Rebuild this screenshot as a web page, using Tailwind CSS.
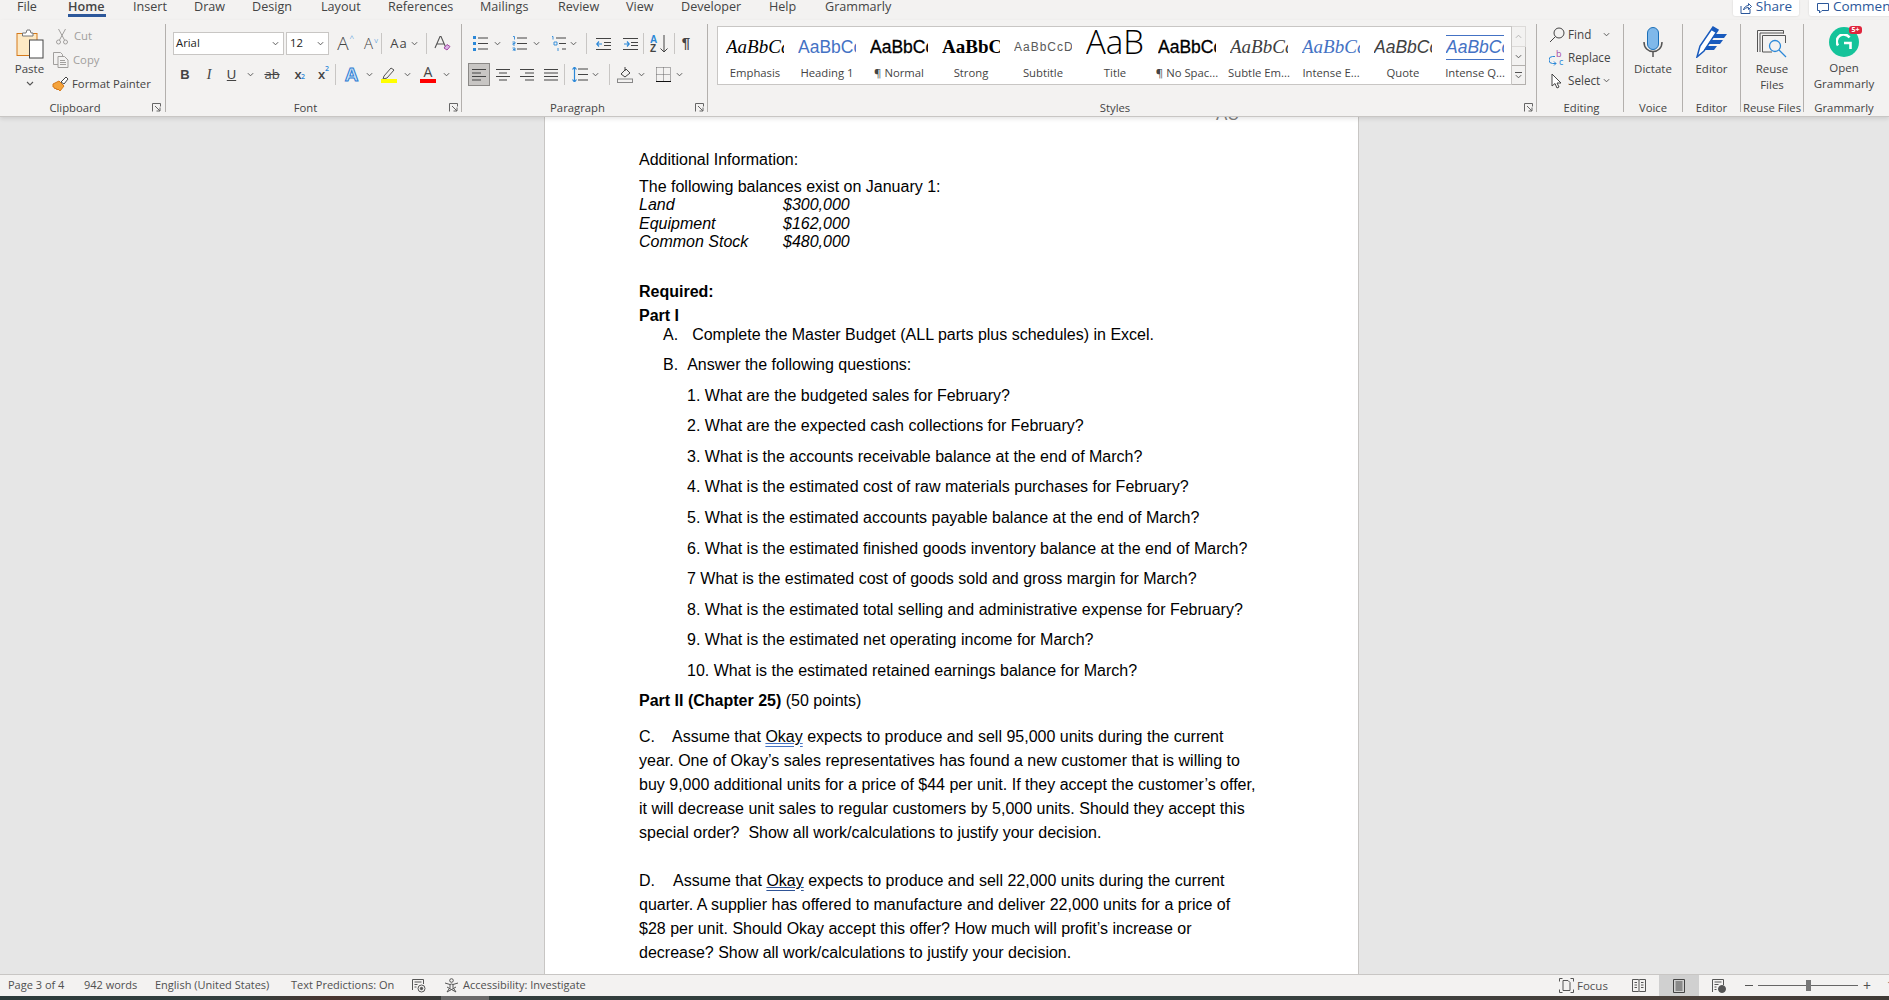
<!DOCTYPE html>
<html lang="en">
<head>
  <meta charset="UTF-8" />
  <title>Word</title>
  <script src="https://cdn.jsdelivr.net/npm/@tailwindcss/browser@4"></script>
</head>
<body class="w-[1889px] h-[1000px] overflow-hidden flex flex-col bg-[#e6e6e6] font-['Open_Sans',sans-serif] text-[#444444]">

  <!-- icon sprite -->
  <svg class="hidden">
    <symbol id="chev" viewBox="0 0 8 5"><path d="M1 1l3 3 3-3" fill="none" stroke="#555" stroke-width="1.1"/></symbol>
    <symbol id="launch" viewBox="0 0 9 9"><path d="M.5 8.5V.5h8v3M.5.5" fill="none" stroke="#666"/><path d="M3 3l5 5M8 4.5V8H4.5" fill="none" stroke="#666"/></symbol>
  </svg>

  <!-- tabs -->
  <div class="h-[20px] shrink-0 bg-[#f3f2f1] flex overflow-hidden pl-[17px] text-[12.6px] leading-[20px]">
    <span class="w-[51px] -mt-[3px]">File</span>
    <span class="w-[65px] -mt-[3px] font-semibold"><span class="block w-[38px] h-[20px] border-b-[3px] border-[#2b579a]">Home</span></span>
    <span class="w-[61px] -mt-[3px]">Insert</span>
    <span class="w-[58px] -mt-[3px]">Draw</span>
    <span class="w-[69px] -mt-[3px]">Design</span>
    <span class="w-[67px] -mt-[3px]">Layout</span>
    <span class="w-[92px] -mt-[3px]">References</span>
    <span class="w-[78px] -mt-[3px]">Mailings</span>
    <span class="w-[68px] -mt-[3px]">Review</span>
    <span class="w-[55px] -mt-[3px]">View</span>
    <span class="w-[88px] -mt-[3px]">Developer</span>
    <span class="w-[56px] -mt-[3px]">Help</span>
    <span class="w-[64px] -mt-[3px]">Grammarly</span>
    <div class="ml-auto -mr-[10px] flex gap-[10px] shrink-0 text-[#2b579a] text-[13.5px]">
      <div class="w-[66px] h-[16px] bg-white rounded-b-[2px] flex items-center justify-center gap-[4px] shadow-[0_0_2px_rgba(0,0,0,0.15)]">
        <svg class="w-[12px] h-[12px]" viewBox="0 0 12 12" fill="none" stroke="#2b579a"><path d="M1 4v7.5h9V7"/><path d="M3.5 8c.5-3 3-4.500 5-4.500V1.500l3 3-3 3V5.500c-2 0-4 1-5 2.500z"/></svg>
        <span class="-mt-[5px]">Share</span>
      </div>
      <div class="w-[90px] h-[16px] bg-white rounded-b-[2px] flex items-center pl-[8px] gap-[4px] shadow-[0_0_2px_rgba(0,0,0,0.15)]">
        <svg class="w-[12px] h-[12px]" viewBox="0 0 12 12" fill="none" stroke="#2b579a"><path d="M.5 1.500h11v7H5l-2.500 2.500V8.500h-2z"/></svg>
        <span class="-mt-[5px]">Comment</span>
      </div>
    </div>
  </div>

  <!-- ribbon -->
  <div class="relative z-10 h-[97px] shrink-0 bg-[#f3f2f1] border-b border-[#c8c6c4] shadow-[0_2px_4px_rgba(0,0,0,0.1)] flex text-[11.3px]">

    <!-- clipboard -->
    <div class="relative w-[165px] h-[96px] shrink-0 flex flex-col">
      <div class="h-[80px] flex">
        <div class="w-[53px] flex flex-col items-center pt-[8px]">
          <svg class="w-[28px] h-[31px] ml-[6px]" viewBox="0 0 28 31">
            <rect x="1" y="5.500" width="20" height="22" fill="#fde9c4" stroke="#d67a1b"/>
            <path d="M6.500 8V5h3.500l1-3h3l1 3h2v3z" fill="#fff" stroke="#777"/>
            <rect x="13.500" y="12" width="13.500" height="18" fill="#fff" stroke="#444"/>
          </svg>
          <span class="mt-[2px] ml-[6px] leading-[16px] text-[11.5px]">Paste</span>
          <svg class="w-[8px] h-[5px] mt-[4px] ml-[6px]"><use href="#chev"/></svg>
        </div>
        <div class="flex flex-col pt-[4px]">
          <div class="h-[24px] flex items-center gap-[4px] text-[#a19f9d]">
            <svg class="w-[12px] h-[17px] ml-[3px]" viewBox="0 0 12 17" fill="none" stroke="#a19f9d"><path d="M2.500 1l6 11M9.500 1l-6 11"/><circle cx="2.500" cy="14" r="2"/><circle cx="9.500" cy="14" r="2"/></svg>
            <span class="ml-[2px]">Cut</span>
          </div>
          <div class="h-[24px] flex items-center gap-[4px] text-[#a19f9d]">
            <svg class="w-[16px] h-[16px]" viewBox="0 0 16 16" fill="none" stroke="#a19f9d"><path d="M5 12.500H.5V.5h7l2 2v2"/><path d="M5 4.500h6.500l3.500 3.500v7.500H5z"/><path d="M7 8.500h5M7 10.500h6M7 12.500h6"/></svg>
            <span>Copy</span>
          </div>
          <div class="h-[24px] flex items-center gap-[3px] -ml-[1px]">
            <svg class="w-[17px] h-[16px]" viewBox="0 0 17 16"><path d="M1 8l6-3 5 5-4 5-2-2-1 1-1-2-1 1-1-2-1 0z" fill="#f5a33a" stroke="#d67a1b"/><path d="M9 6l5-5 2 2-4 5z" fill="#fff" stroke="#444"/></svg>
            <span class="whitespace-nowrap">Format Painter</span>
          </div>
        </div>
      </div>
      <div class="relative h-[16px] leading-[16px] text-center pr-[15px]">Clipboard
        <svg class="absolute right-[4px] top-[3px] w-[9px] h-[9px]"><use href="#launch"/></svg>
      </div>
    </div>
    <div class="w-px h-[88px] mt-[4px] bg-[#b3b0ad] shrink-0"></div>

    <!-- font -->
    <div class="relative w-[295px] h-[96px] shrink-0 flex flex-col">
      <div class="h-[80px] pt-[12px] pl-[7px] flex flex-col gap-[8px]">
        <div class="h-[23px] flex items-center">
          <div class="w-[111px] h-[23px] bg-white border border-[#c8c6c4] flex items-center justify-between pl-[2px] pr-[4px] text-[#222]">Arial<svg class="w-[7px] h-[5px]"><use href="#chev"/></svg></div>
          <div class="w-[43px] h-[23px] ml-[2px] bg-white border border-[#c8c6c4] flex items-center justify-between pl-[3px] pr-[4px] text-[#222]">12<svg class="w-[7px] h-[5px]"><use href="#chev"/></svg></div>
          <div class="w-[26px] text-center text-[19px] font-light leading-none ml-[1px] relative">A<span class="absolute right-[2px] top-[0px] text-[8px] text-[#2b88d8]">^</span></div>
          <div class="w-[25px] text-center text-[15px] font-light leading-none relative">A<span class="absolute right-[3px] top-[0px] text-[8px] text-[#2b88d8]">v</span></div>
          <div class="w-px h-[21px] bg-[#c8c6c4]"></div>
          <div class="w-[44px] flex items-center justify-center gap-[3px] text-[13px] tracking-[1px]">Aa<svg class="w-[7px] h-[5px]"><use href="#chev"/></svg></div>
          <div class="w-px h-[21px] bg-[#c8c6c4]"></div>
          <div class="w-[30px] flex justify-center">
            <svg class="w-[17px] h-[17px]" viewBox="0 0 17 17" fill="none"><path d="M1 13L6 1.500h1L12 13M3 9h7" stroke="#555" stroke-width="1.100"/><path d="M10 13l3-3.500 3 2-3 3.500z" fill="#d9b3e6" stroke="#a349a4"/></svg>
          </div>
        </div>
        <div class="h-[23px] flex items-center">
          <div class="w-[24px] text-center font-['Liberation_Sans',sans-serif] font-bold text-[13px]">B</div>
          <div class="w-[24px] text-center font-['Liberation_Serif',serif] italic text-[14px]">I</div>
          <div class="w-[21px] text-center font-['Liberation_Sans',sans-serif] underline text-[13px]">U</div>
          <div class="w-[16px] flex justify-center"><svg class="w-[7px] h-[5px]"><use href="#chev"/></svg></div>
          <div class="w-[28px] text-center text-[13px] line-through">ab</div>
          <div class="w-[24px] text-center font-semibold text-[13px] relative">x<span class="absolute left-[15px] top-[7px] text-[7px] text-[#2b88d8]">2</span></div>
          <div class="w-[23px] text-center font-semibold text-[13px] relative">x<span class="absolute left-[15px] -top-[1px] text-[7px] text-[#2b88d8]">2</span></div>
          <div class="w-px h-[21px] bg-[#c8c6c4] ml-[2px]"></div>
          <div class="w-[21px] ml-[5px] text-center font-['Liberation_Sans',sans-serif] font-bold text-[19px] leading-none text-[#cfe6f8] [-webkit-text-stroke:1px_#2b7cd3]">A</div>
          <div class="w-[14px] flex justify-center"><svg class="w-[7px] h-[5px]"><use href="#chev"/></svg></div>
          <div class="w-[22px] ml-[2px] flex justify-center">
            <svg class="w-[16px] h-[17px]" viewBox="0 0 16 17"><path d="M3 10l7-8 3 2-7 8-4 1z" fill="none" stroke="#555"/><rect y="13" width="16" height="4" fill="#ffff00"/></svg>
          </div>
          <div class="w-[14px] flex justify-center"><svg class="w-[7px] h-[5px]"><use href="#chev"/></svg></div>
          <div class="w-[24px] ml-[2px] flex flex-col items-center -mt-[2px]">
            <span class="text-[14px] leading-[14px]">A</span>
            <span class="w-[16px] h-[4px] bg-[#ff0000]"></span>
          </div>
          <div class="w-[12px] flex justify-center"><svg class="w-[7px] h-[5px]"><use href="#chev"/></svg></div>
        </div>
      </div>
      <div class="relative h-[16px] leading-[16px] text-center pr-[16px]">Font
        <svg class="absolute right-[3px] top-[3px] w-[9px] h-[9px]"><use href="#launch"/></svg>
      </div>
    </div>
    <div class="w-px h-[88px] mt-[4px] bg-[#b3b0ad] shrink-0"></div>

    <!-- paragraph -->
    <div class="relative w-[245px] h-[96px] shrink-0 flex flex-col">
      <div class="h-[80px] pt-[12px] pl-[9px] flex flex-col gap-[8px]">
        <div class="h-[23px] flex items-center">
          <div class="w-[39px] pl-[2px] flex items-center gap-[6px]">
            <svg class="w-[15px] h-[15px]" viewBox="0 0 15 15"><path d="M5 2h10M5 7.500h10M5 13h10" stroke="#444"/><path d="M0 0h3v3H0zM0 6h3v3H0zM0 12h3v3H0z" fill="#2b88d8"/></svg>
            <svg class="w-[7px] h-[5px]"><use href="#chev"/></svg>
          </div>
          <div class="w-[39px] pl-[2px] flex items-center gap-[6px]">
            <svg class="w-[15px] h-[15px]" viewBox="0 0 15 15"><path d="M5 2h10M5 7.500h10M5 13h10" stroke="#444"/><path d="M1 .5h1.500v3M.5 6h2.500v1.500H1V9h2M.5 12h2.500v3H.5M1 13.500h2" stroke="#2b88d8" fill="none" stroke-width=".9"/></svg>
            <svg class="w-[7px] h-[5px]"><use href="#chev"/></svg>
          </div>
          <div class="w-[37px] pl-[2px] flex items-center gap-[4px]">
            <svg class="w-[15px] h-[15px]" viewBox="0 0 15 15"><path d="M5 2h10M8 7.500h7M11 13h4" stroke="#444"/><path d="M1 .5h1v3M3 6h3v3H3zM7 12v3" stroke="#2b88d8" fill="none" stroke-width=".9"/></svg>
            <svg class="w-[7px] h-[5px]"><use href="#chev"/></svg>
          </div>
          <div class="w-px h-[21px] bg-[#c8c6c4]"></div>
          <div class="w-[32px] flex justify-center">
            <svg class="w-[15px] h-[12px]" viewBox="0 0 15 12"><path d="M0 .5h15M8 4.500h7M8 7.500h7M0 11.500h15" stroke="#444"/><path d="M6 6H1M3 3.500L.8 6 3 8.500" fill="none" stroke="#2b88d8" stroke-width="1.200"/></svg>
          </div>
          <div class="w-[22px] flex justify-center">
            <svg class="w-[15px] h-[12px]" viewBox="0 0 15 12"><path d="M0 .5h15M8 4.500h7M8 7.500h7M0 11.500h15" stroke="#444"/><path d="M1 6h5M4 3.500L6.200 6 4 8.500" fill="none" stroke="#2b88d8" stroke-width="1.200"/></svg>
          </div>
          <div class="w-px h-[21px] bg-[#c8c6c4] ml-[2px]"></div>
          <div class="w-[30px] flex justify-center">
            <span class="relative w-[18px] h-[18px] flex flex-col font-['Liberation_Sans',sans-serif] text-[10px] leading-[9px]"><span class="text-[#2b88d8] font-bold">A</span><span class="font-bold">Z</span>
              <svg class="absolute right-[0px] top-[0px] w-[8px] h-[18px]" viewBox="0 0 8 18" fill="none" stroke="#444"><path d="M4 0v17M.5 13.500L4 17l3.500-3.500"/></svg>
            </span>
          </div>
          <div class="w-px h-[21px] bg-[#c8c6c4]"></div>
          <div class="w-[22px] text-center text-[15px] font-bold font-['Liberation_Sans',sans-serif]">¶</div>
        </div>
        <div class="h-[23px] flex items-center -ml-[3px]">
          <div class="w-[22px] h-[23px] bg-[#c8c6c4] border border-[#8a8886] flex items-center justify-center">
            <svg class="w-[14px] h-[12px]" viewBox="0 0 14 12"><path d="M0 .5h14M0 4h9M0 7.500h14M0 11h9" stroke="#444"/></svg>
          </div>
          <div class="w-[24px] ml-[1px] flex justify-center"><svg class="w-[14px] h-[12px]" viewBox="0 0 14 12"><path d="M0 .5h14M3 4h8M0 7.500h14M3 11h8" stroke="#444"/></svg></div>
          <div class="w-[24px] flex justify-center"><svg class="w-[14px] h-[12px]" viewBox="0 0 14 12"><path d="M0 .5h14M5 4h9M0 7.500h14M5 11h9" stroke="#444"/></svg></div>
          <div class="w-[24px] flex justify-center"><svg class="w-[14px] h-[12px]" viewBox="0 0 14 12"><path d="M0 .5h14M0 4h14M0 7.500h14M0 11h14" stroke="#444"/></svg></div>
          <div class="w-px h-[21px] bg-[#c8c6c4] ml-[1px]"></div>
          <div class="w-[43px] pl-[7px] flex items-center gap-[4px]">
            <svg class="w-[16px] h-[15px]" viewBox="0 0 16 15"><path d="M6 2h10M6 7.500h10M6 13h10" stroke="#444"/><path d="M2.500 0v15M.5 2.500L2.500 0l2 2.500M.5 12.500l2 2.500 2-2.500" fill="none" stroke="#2b88d8" stroke-width="1.200"/></svg>
            <svg class="w-[7px] h-[5px]"><use href="#chev"/></svg>
          </div>
          <div class="w-px h-[21px] bg-[#c8c6c4] ml-[1px]"></div>
          <div class="w-[46px] pl-[7px] flex items-center gap-[5px]">
            <svg class="w-[16px] h-[16px]" viewBox="0 0 16 16" fill="none"><path d="M4 7l5-5 4 4-5 4z" stroke="#444"/><path d="M8 0v4" stroke="#444"/><rect x=".5" y="12" width="15" height="3.500" stroke="#888"/></svg>
            <svg class="w-[7px] h-[5px]"><use href="#chev"/></svg>
          </div>
          <div class="w-[28px] flex items-center gap-[5px]">
            <svg class="w-[15px] h-[15px]" viewBox="0 0 15 15" fill="none"><path d="M.5.5h14M.5.5v14M14.500.5v14M7.500.5v14M.5 7.500h14" stroke="#666" stroke-dasharray="1 1"/><path d="M0 14.500h15" stroke="#111"/></svg>
            <svg class="w-[7px] h-[5px]"><use href="#chev"/></svg>
          </div>
        </div>
      </div>
      <div class="relative h-[16px] leading-[16px] text-center pr-[14px]">Paragraph
        <svg class="absolute right-[3px] top-[3px] w-[9px] h-[9px]"><use href="#launch"/></svg>
      </div>
    </div>
    <div class="w-px h-[88px] mt-[4px] bg-[#b3b0ad] shrink-0"></div>

    <!-- styles -->
    <div class="relative w-[828px] h-[96px] shrink-0 flex flex-col">
      <div class="h-[80px] pt-[6px] pl-[9px] flex">
        <div class="w-[795px] h-[59px] bg-white border border-[#c8c6c4] flex pl-[1px]">
          <div class="w-[72px] flex flex-col items-center">
            <div class="w-[58px] h-[34px] mt-[3px] overflow-hidden whitespace-nowrap leading-[34px] font-['Liberation_Serif',serif] italic text-[19px] text-black">AaBbCc</div>
            <span class="leading-[16px] mt-[1px] whitespace-nowrap">Emphasis</span>
          </div>
          <div class="w-[72px] flex flex-col items-center">
            <div class="w-[58px] h-[34px] mt-[3px] overflow-hidden whitespace-nowrap leading-[34px] font-['Liberation_Sans',sans-serif] text-[17.5px] text-[#4472c4]">AaBbCc</div>
            <span class="leading-[16px] mt-[1px] whitespace-nowrap">Heading 1</span>
          </div>
          <div class="w-[72px] flex flex-col items-center">
            <div class="w-[58px] h-[34px] mt-[3px] overflow-hidden whitespace-nowrap leading-[34px] font-['Liberation_Sans',sans-serif] text-[17.5px] text-black [-webkit-text-stroke:0.3px_black]">AaBbCc</div>
            <span class="leading-[16px] mt-[1px] whitespace-nowrap">¶ Normal</span>
          </div>
          <div class="w-[72px] flex flex-col items-center">
            <div class="w-[58px] h-[34px] mt-[3px] overflow-hidden whitespace-nowrap leading-[34px] font-['Liberation_Serif',serif] font-bold text-[19px] text-black">AaBbCc</div>
            <span class="leading-[16px] mt-[1px] whitespace-nowrap">Strong</span>
          </div>
          <div class="w-[72px] flex flex-col items-center">
            <div class="w-[58px] h-[34px] mt-[3px] overflow-hidden whitespace-nowrap leading-[34px] font-['Liberation_Sans',sans-serif] text-[12px] tracking-[1px] text-[#595959]">AaBbCcD</div>
            <span class="leading-[16px] mt-[1px] whitespace-nowrap">Subtitle</span>
          </div>
          <div class="w-[72px] flex flex-col items-center">
            <div class="w-[58px] h-[34px] mt-[3px] overflow-hidden whitespace-nowrap leading-[24px] font-['Open_Sans',sans-serif] font-light text-[33px] text-black">AaB</div>
            <span class="leading-[16px] mt-[1px] whitespace-nowrap">Title</span>
          </div>
          <div class="w-[72px] flex flex-col items-center">
            <div class="w-[58px] h-[34px] mt-[3px] overflow-hidden whitespace-nowrap leading-[34px] font-['Liberation_Sans',sans-serif] text-[17.5px] text-black [-webkit-text-stroke:0.3px_black]">AaBbCc</div>
            <span class="leading-[16px] mt-[1px] whitespace-nowrap">¶ No Spac...</span>
          </div>
          <div class="w-[72px] flex flex-col items-center">
            <div class="w-[58px] h-[34px] mt-[3px] overflow-hidden whitespace-nowrap leading-[34px] font-['Liberation_Serif',serif] italic text-[19px] text-[#404040]">AaBbCc</div>
            <span class="leading-[16px] mt-[1px] whitespace-nowrap">Subtle Em...</span>
          </div>
          <div class="w-[72px] flex flex-col items-center">
            <div class="w-[58px] h-[34px] mt-[3px] overflow-hidden whitespace-nowrap leading-[34px] font-['Liberation_Serif',serif] italic text-[19px] text-[#4472c4]">AaBbCc</div>
            <span class="leading-[16px] mt-[1px] whitespace-nowrap">Intense E...</span>
          </div>
          <div class="w-[72px] flex flex-col items-center">
            <div class="w-[58px] h-[34px] mt-[3px] overflow-hidden whitespace-nowrap leading-[34px] font-['Liberation_Sans',sans-serif] italic text-[17.5px] text-[#404040]">AaBbCc</div>
            <span class="leading-[16px] mt-[1px] whitespace-nowrap">Quote</span>
          </div>
          <div class="w-[72px] flex flex-col items-center">
            <div class="w-[58px] h-[25px] mt-[8px] mb-[4px] border-y border-[#4472c4] overflow-hidden whitespace-nowrap leading-[23px] font-['Liberation_Sans',sans-serif] italic text-[17.5px] text-[#4472c4]">AaBbCc</div>
            <span class="leading-[16px] mt-[1px] whitespace-nowrap">Intense Q...</span>
          </div>
        </div>
        <div class="w-[14px] h-[59px] flex flex-col">
          <div class="h-[21px] bg-[#f3f2f1] border border-l-0 border-[#dcdad8] flex items-center justify-center"><svg class="w-[7px] h-[5px] rotate-180 opacity-40"><use href="#chev"/></svg></div>
          <div class="h-[19px] border border-l-0 border-t-0 border-[#b3b0ad] flex items-center justify-center"><svg class="w-[7px] h-[5px]"><use href="#chev"/></svg></div>
          <div class="h-[19px] border border-l-0 border-t-0 border-[#b3b0ad] flex flex-col items-center justify-center"><span class="w-[7px] h-px bg-[#555] mb-[1px]"></span><svg class="w-[7px] h-[5px]"><use href="#chev"/></svg></div>
        </div>
      </div>
      <div class="relative h-[16px] leading-[16px] text-center pr-[14px]">Styles
        <svg class="absolute right-[3px] top-[3px] w-[9px] h-[9px]"><use href="#launch"/></svg>
      </div>
    </div>
    <div class="w-px h-[88px] mt-[4px] bg-[#b3b0ad] shrink-0"></div>

    <!-- editing -->
    <div class="w-[86px] h-[96px] shrink-0 flex flex-col">
      <div class="h-[80px] pt-[3px] pl-[12px] flex flex-col text-[11.7px]">
        <div class="h-[23px] flex items-center">
          <svg class="w-[16px] h-[16px]" viewBox="0 0 16 16" fill="none" stroke="#444"><circle cx="10" cy="6" r="5"/><path d="M6.500 9.500L1 15"/></svg>
          <span class="ml-[3px]">Find</span>
          <svg class="w-[7px] h-[5px] ml-[12px]"><use href="#chev"/></svg>
        </div>
        <div class="h-[23px] flex items-center">
          <svg class="w-[16px] h-[16px]" viewBox="0 0 16 16" fill="none"><path d="M6 6.500H3.500a2.500 2.500 0 000 7H7M5 11.500l2 2-2 2" stroke="#2b88d8"/><text x="7" y="7" font-size="9" fill="#a349a4" font-family="Open Sans">b</text><text x="10" y="15" font-size="9" fill="#2b88d8" font-family="Open Sans">c</text></svg>
          <span class="ml-[3px]">Replace</span>
        </div>
        <div class="h-[23px] flex items-center">
          <svg class="w-[12px] h-[16px] ml-[2px]" viewBox="0 0 12 16" fill="#fff" stroke="#444"><path d="M1 1v12l3-2.500 2 4.500 2-1-2-4h4z"/></svg>
          <span class="ml-[5px]">Select</span>
          <svg class="w-[7px] h-[5px] ml-[3px]"><use href="#chev"/></svg>
        </div>
      </div>
      <div class="h-[16px] leading-[16px] text-center pl-[3px]">Editing</div>
    </div>
    <div class="w-px h-[88px] mt-[4px] bg-[#b3b0ad] shrink-0"></div>

    <!-- voice -->
    <div class="w-[58px] h-[96px] shrink-0 flex flex-col items-center">
      <div class="h-[80px] flex flex-col items-center pt-[7px]">
        <svg class="w-[20px] h-[31px]" viewBox="0 0 20 31" fill="none">
          <rect x="4.500" y=".5" width="11" height="22" rx="5.500" fill="#7fb8ea" stroke="#1b6fb8"/>
          <path d="M1 15c0 6 4 9.500 9 9.500s9-3.500 9-9.500" stroke="#555" stroke-width="1.500"/>
          <path d="M10 25v5" stroke="#555" stroke-width="1.500"/>
        </svg>
        <span class="text-[11.5px] leading-[16px] mt-[3px]">Dictate</span>
      </div>
      <div class="h-[16px] leading-[16px]">Voice</div>
    </div>
    <div class="w-px h-[88px] mt-[4px] bg-[#b3b0ad] shrink-0"></div>

    <!-- editor -->
    <div class="w-[57px] h-[96px] shrink-0 flex flex-col items-center">
      <div class="h-[80px] flex flex-col items-center pt-[6px]">
        <svg class="w-[31px] h-[32px]" viewBox="0 0 31 32">
          <path d="M1 31l3-11L17 1l5 3L8 25z" fill="#fff" stroke="#185abd" stroke-width="1.500"/>
          <path d="M17 1l5 3-2 3-5-3z" fill="#185abd"/>
          <path d="M19 8h12l-3 4H16zM15 14h12l-3 4H12zM11 20h10l-3 4H8z" fill="#185abd"/>
        </svg>
        <span class="text-[11.5px] leading-[16px] mt-[3px]">Editor</span>
      </div>
      <div class="h-[16px] leading-[16px]">Editor</div>
    </div>
    <div class="w-px h-[88px] mt-[4px] bg-[#b3b0ad] shrink-0"></div>

    <!-- reuse files -->
    <div class="w-[62px] h-[96px] shrink-0 flex flex-col items-center">
      <div class="h-[80px] flex flex-col items-center pt-[10px]">
        <svg class="w-[30px] h-[28px]" viewBox="0 0 30 28" fill="none">
          <path d="M.5 22V.5h26v3" stroke="#555"/>
          <path d="M3 22V3h24" stroke="#555"/>
          <path d="M5.500 22V5.500h23V13M5.500 22H15" stroke="#555"/>
          <circle cx="18" cy="16" r="5.500" stroke="#2b88d8" stroke-width="1.300"/>
          <path d="M22 20l7 7" stroke="#2b88d8" stroke-width="1.300"/>
        </svg>
        <span class="text-[11.5px] leading-[16px] text-center mt-[3px]">Reuse<br>Files</span>
      </div>
      <div class="h-[16px] leading-[16px] whitespace-nowrap">Reuse Files</div>
    </div>
    <div class="w-px h-[88px] mt-[4px] bg-[#b3b0ad] shrink-0"></div>

    <!-- grammarly -->
    <div class="w-[84px] h-[96px] pr-[4px] shrink-0 flex flex-col items-center">
      <div class="h-[80px] flex flex-col items-center pt-[6px]">
        <div class="relative w-[30px] h-[30px] mt-[1px] rounded-full bg-[#15c39a] flex items-center justify-center">
          <svg class="w-[17px] h-[17px]" viewBox="0 0 17 17" fill="none" stroke="#fff" stroke-width="2.600"><path d="M13.500 3.500A7 7 0 102 11.500M8 9h6.500v6"/></svg>
          <span class="absolute -right-[3px] -top-[1px] w-[13px] h-[8px] bg-[#e0243c] rounded-[3px] text-white text-[7px] leading-[8px] text-center font-bold">5+</span>
        </div>
        <span class="text-[11.5px] leading-[16px] text-center mt-[3px]">Open<br>Grammarly</span>
      </div>
      <div class="h-[16px] leading-[16px]">Grammarly</div>
    </div>
  </div>

  <!-- document -->
  <main class="flex-1 min-h-0 overflow-hidden bg-[#e6e6e6]">
    <div class="ml-[544px] w-[815px] h-full bg-white border-x border-[#c8c6c4] pl-[94px] text-black font-['Liberation_Sans',sans-serif] text-[16px] whitespace-nowrap">
      <div class="h-[7px] overflow-hidden -ml-[94px] pl-[671px] text-[#7f7f7f] text-[17px] leading-[17px]"><span class="block -mt-[11px]">AU</span></div>
      <p class="mt-[24px] leading-[24px]">Additional Information:</p>
      <p class="mt-[6px] leading-[18px]">The following balances exist on January 1:</p>
      <div class="leading-[18.500px] italic grid grid-cols-[144px_1fr]">
        <span>Land</span><span>$300,000</span>
        <span>Equipment</span><span>$162,000</span>
        <span>Common Stock</span><span>$480,000</span>
      </div>
      <p class="mt-[28px] leading-[24px] font-bold">Required:</p>
      <p class="mt-[2px] leading-[20px] font-bold">Part I</p>
      <div class="-mt-[1px] flex flex-col gap-[10.600px] leading-[20px] pl-[24px]">
        <p>A.<span class="ml-[14px]">Complete the Master Budget (ALL parts plus schedules) in Excel.</span></p>
        <p>B.<span class="ml-[9px]">Answer the following questions:</span></p>
        <div class="flex flex-col gap-[10.600px] pl-[24px]">
          <p>1. What are the budgeted sales for February?</p>
          <p>2. What are the expected cash collections for February?</p>
          <p>3. What is the accounts receivable balance at the end of March?</p>
          <p>4. What is the estimated cost of raw materials purchases for February?</p>
          <p>5. What is the estimated accounts payable balance at the end of March?</p>
          <p>6. What is the estimated finished goods inventory balance at the end of March?</p>
          <p>7 What is the estimated cost of goods sold and gross margin for March?</p>
          <p>8. What is the estimated total selling and administrative expense for February?</p>
          <p>9. What is the estimated net operating income for March?</p>
          <p>10. What is the estimated retained earnings balance for March?</p>
        </div>
      </div>
      <p class="mt-[10px] leading-[20px]"><b>Part II (Chapter 25)</b> (50 points)</p>
      <p class="mt-[14px] leading-[24px]">C.<span class="ml-[17px]">Assume that</span> <span class="underline decoration-double decoration-[#4472c4]">Okay</span> expects to produce and sell 95,000 units during the current<br>year. One of Okay’s sales representatives has found a new customer that is willing to<br>buy 9,000 additional units for a price of $44 per unit. If they accept the customer’s offer,<br>it will decrease unit sales to regular customers by 5,000 units. Should they accept this<br>special order?&nbsp; Show all work/calculations to justify your decision.</p>
      <p class="mt-[24px] leading-[24px]">D.<span class="ml-[18px]">Assume that</span> <span class="underline decoration-double decoration-[#2f5496]">Okay</span> expects to produce and sell 22,000 units during the current<br>quarter. A supplier has offered to manufacture and deliver 22,000 units for a price of<br>$28 per unit. Should Okay accept this offer? How much will profit’s increase or<br>decrease? Show all work/calculations to justify your decision.</p>
    </div>
  </main>

  <!-- status bar -->
  <div class="h-[22px] shrink-0 bg-[#f3f2f1] border-t border-[#c8c6c4] flex items-center pl-[8px] text-[11px] text-[#505050] whitespace-nowrap">
    <span class="w-[76px]">Page 3 of 4</span>
    <span class="w-[71px]">942 words</span>
    <span class="w-[136px]">English (United States)</span>
    <span class="w-[121px]">Text Predictions: On</span>
    <svg class="w-[14px] h-[14px] ml-[0px]" viewBox="0 0 14 14" fill="none" stroke="#555"><path d="M.5 11V.5h11V5M2.500 3h7M2.500 5.500h3M2.500 8h2"/><circle cx="9.500" cy="9.500" r="3.500"/><circle cx="9.500" cy="9.500" r="1.200" fill="#555"/></svg>
    <svg class="w-[15px] h-[15px] ml-[18px]" viewBox="0 0 15 15" fill="none" stroke="#555"><circle cx="7.500" cy="2.500" r="1.800"/><path d="M1 5l5 1.500 1.500-.5 1.500.5L14 5M6 6.500v3L3 14M9 6.500v3l3 4.500M3 9l9 5M12 9l-9 5"/></svg>
    <span class="ml-[4px]">Accessibility: Investigate</span>
    <div class="ml-auto flex items-center h-full">
      <svg class="w-[15px] h-[15px]" viewBox="0 0 15 15" fill="none" stroke="#555"><path d="M.5 3.500v-3h3M11.500.5h3v3M14.500 11.500v3h-3M3.500 14.500h-3v-3"/><path d="M4 2.500h5l2 2v8H4z"/></svg>
      <span class="ml-[3px] w-[55px] text-[11.5px]">Focus</span>
      <svg class="w-[14px] h-[13px]" viewBox="0 0 14 13" fill="none" stroke="#555"><path d="M.5.5h6l.5 1 .5-1h6v12h-6l-.5-.5-.5.5h-6zM7 1.500V12M2.500 3.500h2.500M2.500 6h2.500M2.500 8.500h2.500M9 3.500h2.500M9 6h2.500M9 8.500h2.500"/></svg>
      <div class="w-[40px] h-full ml-[13px] bg-[#d0d0d0] flex items-center justify-center">
        <svg class="w-[12px] h-[14px]" viewBox="0 0 12 14" fill="none" stroke="#444"><path d="M.5.5h11v13H.5zM2.500 3h7M2.500 5h7M2.500 7h7M2.500 9h7M2.500 11h7"/></svg>
      </div>
      <svg class="w-[14px] h-[14px] ml-[13px]" viewBox="0 0 14 14" fill="none" stroke="#555"><path d="M.5 13V.5h11V6M2.500 3h7M2.500 5.500h4M2.500 8h2M2.500 10.500h2"/><circle cx="10" cy="10" r="3.500" fill="#555"/></svg>
      <span class="w-[8px] h-px bg-[#555] ml-[19px]"></span>
      <div class="relative w-[100px] h-px bg-[#666] ml-[5px]">
        <span class="absolute left-[48px] -top-[5px] w-[5px] h-[11px] bg-[#777]"></span>
      </div>
      <span class="ml-[5px] text-[14px] leading-none w-[9px]">+</span>
      <span class="ml-[15px] w-[2px] overflow-hidden">100%</span>
    </div>
  </div>
  <div class="h-[4px] shrink-0 flex">
    <div class="w-[441px] bg-[linear-gradient(to_right,#2c3b3b_0%,#33403f_55%,#4a3530_75%,#3a3d3b_100%)]"></div>
    <div class="w-[48px] bg-[#6a6a6a]"></div>
    <div class="flex-1 bg-[linear-gradient(to_right,#333d3c_0%,#2f4342_45%,#3c3f3d_65%,#4a403a_85%,#3f3a36_100%)]"></div>
  </div>
</body>
</html>
